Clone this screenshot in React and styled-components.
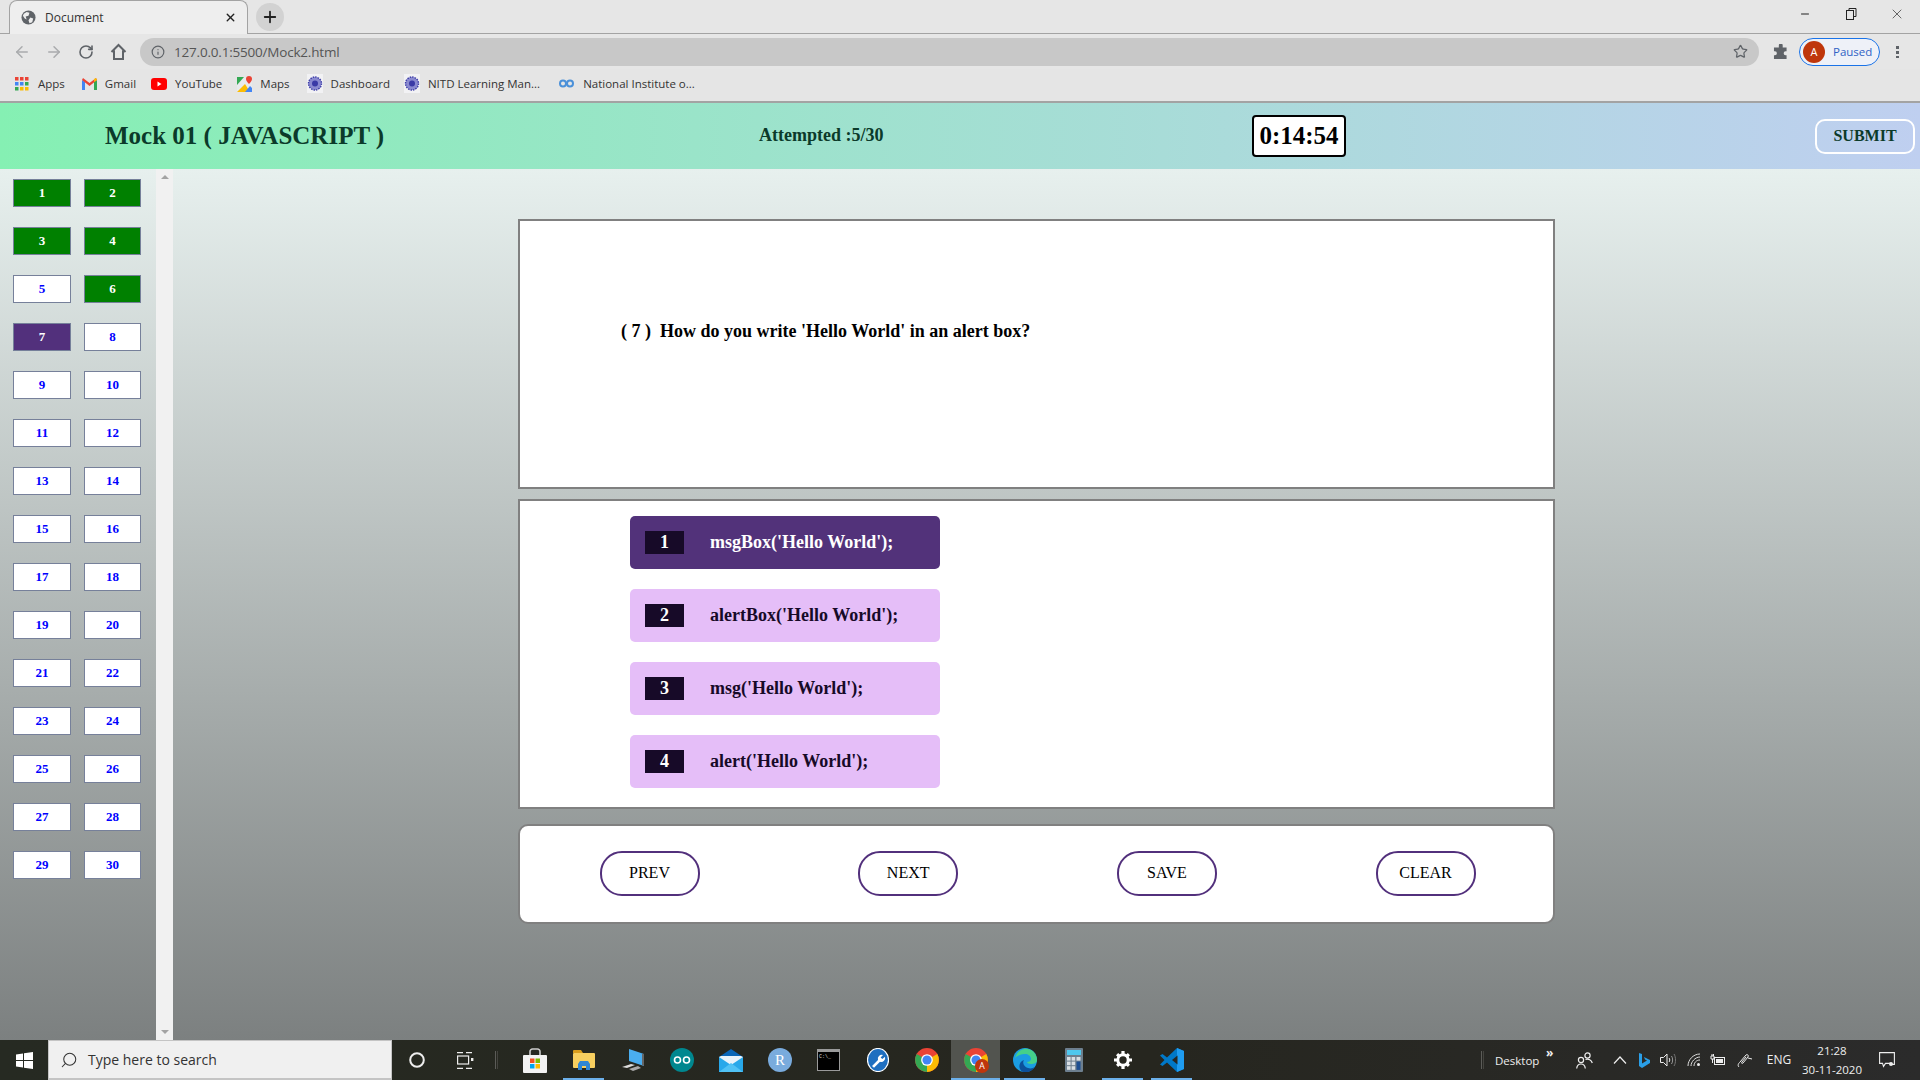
import React from 'react';
import styled, { createGlobalStyle } from 'styled-components';
import { ArrowLeft, ArrowRight, RotateCw, Info, Star, Search, X, Plus, Minus } from 'lucide-react';

const GlobalStyle = createGlobalStyle`
  html, body {
    margin: 0;
    padding: 0;
    width: 1920px;
    height: 1080px;
    overflow: hidden;
  }
  * {
    box-sizing: border-box;
  }
`;

const Screen = styled.div`
  width: 1920px;
  height: 1080px;
  display: flex;
  flex-direction: column;
  font-family: "Liberation Serif", serif;
`;

/* browser chrome */
const TabStrip = styled.div`
  height: 34px;
  background: #e6e6e6;
  border-bottom: 1px solid #a3a3a3;
  display: flex;
  padding-left: 9px;
  font-family: "Open Sans", sans-serif;
`;

const Tab = styled.div`
  width: 239px;
  height: 34px;
  margin-top: 0;
  background: #eeeeee;
  border: 1px solid #a3a3a3;
  border-bottom: none;
  border-radius: 8px 8px 0 0;
  display: flex;
  align-items: center;
  padding: 0 10px 0 11px;
  font-size: 12px;
  color: #333;
`;

const TabTitle = styled.span`
  margin-left: 9px;
  flex: 1;
`;

const NewTab = styled.div`
  width: 28px;
  height: 28px;
  margin: 3px 0 0 8px;
  border-radius: 50%;
  background: #d2d2d2;
  display: flex;
  align-items: center;
  justify-content: center;
`;

const WindowControls = styled.div`
  margin-left: auto;
  display: flex;
  align-items: center;
  height: 28px;
`;

const WindowButton = styled.div`
  width: 46px;
  display: flex;
  justify-content: center;
  color: #222;
`;

const Toolbar = styled.div`
  height: 35px;
  background: #e6e6e6;
  display: flex;
  align-items: center;
  padding-left: 6px;
`;

const NavIcon = styled.div`
  width: 32px;
  display: flex;
  justify-content: center;
  color: ${(p) => (p.$dim ? '#a9abad' : '#5f6368')};
`;

const UrlBar = styled.div`
  width: 1619px;
  height: 28px;
  margin-left: 6px;
  border-radius: 14px;
  background: #c8c8c8;
  display: flex;
  align-items: center;
  padding: 0 11px;
  color: #5f6368;
`;

const UrlText = styled.span`
  margin-left: 9px;
  flex: 1;
  font: 13.5px "Open Sans", sans-serif;
  letter-spacing: -0.2px;
  color: #555;
`;

const ExtIcon = styled.div`
  width: 16px;
  margin-left: 14px;
  display: flex;
`;

const ProfilePill = styled.div`
  width: 81px;
  height: 28px;
  margin-left: 10px;
  border: 1px solid #1a73e8;
  border-radius: 14px;
  background: #eef1f8;
  display: flex;
  align-items: center;
  padding-left: 3px;
  font: 11.5px "Open Sans", sans-serif;
  color: #2f62c5;
`;

const Avatar = styled.span`
  width: 22px;
  height: 22px;
  border-radius: 50%;
  background: #bf360c;
  color: #fff;
  display: flex;
  align-items: center;
  justify-content: center;
  margin-right: 8px;
  font-size: 11px;
`;

const MoreDots = styled.div`
  width: 3px;
  height: 13px;
  margin-left: 16px;
  background: radial-gradient(circle at center, #5f6368 1.5px, transparent 1.7px) 0 0 / 3px 5px;
`;

const Bookmarks = styled.div`
  height: 34px;
  background: #e5e5e5;
  border-bottom: 2px solid #a3a3a3;
  display: flex;
  align-items: center;
  padding: 0 0 3px 15px;
  font: 11.5px "Open Sans", sans-serif;
  color: #333;
`;

const Bookmark = styled.div`
  display: flex;
  align-items: center;
  gap: ${(p) => p.$gap || 8}px;
  margin-right: ${(p) => p.$space || 15}px;
  white-space: nowrap;
`;

/* page header */
const Header = styled.header`
  height: 66px;
  background: linear-gradient(to right, #85f0b3, #bfcff0);
  display: flex;
  align-items: center;
  padding: 0 5px 0 105px;
  color: #0b3a2a;
  font-weight: bold;
`;

const Title = styled.h1`
  width: 654px;
  margin: 0;
  font-size: 25px;
  font-weight: bold;
`;

const Attempted = styled.div`
  width: 493px;
  padding-bottom: 2px;
  font-size: 18px;
`;

const Timer = styled.div`
  width: 94px;
  height: 42px;
  background: #fff;
  border: 2px solid #000;
  border-radius: 4px;
  color: #000;
  font-size: 25px;
  display: flex;
  align-items: center;
  justify-content: center;
`;

const SubmitButton = styled.button`
  width: 100px;
  height: 35px;
  margin-left: auto;
  background: transparent;
  border: 2px solid #fff;
  border-radius: 10px;
  color: #0b3a2a;
  font: bold 16px "Liberation Serif", serif;
`;

/* page body */
const Body = styled.div`
  flex: 1;
  display: flex;
  background: linear-gradient(to bottom, #e7f0ee, #7c8080);
  min-height: 0;
`;

const Sidebar = styled.aside`
  width: 156px;
  padding: 10px 0 0 13px;
  display: grid;
  grid-template-columns: 58px 57px;
  grid-auto-rows: 28px;
  column-gap: 13px;
  row-gap: 20px;
  align-content: start;
`;

const NumberButton = styled.div`
  border: 1px solid #76809a;
  background: ${(p) => (p.$state === 'done' ? '#008000' : p.$state === 'current' ? '#52307c' : '#fff')};
  color: ${(p) => (p.$state === 'todo' ? '#0000ff' : '#fff')};
  font-size: 13px;
  font-weight: bold;
  display: flex;
  align-items: center;
  justify-content: center;
`;

const ScrollBar = styled.div`
  width: 17px;
  background: #f1f1f1;
  display: flex;
  flex-direction: column;
  justify-content: space-between;
  align-items: center;
  padding: 6px 0;
`;

const ScrollArrow = styled.div`
  width: 0;
  height: 0;
  border-left: 4px solid transparent;
  border-right: 4px solid transparent;
  ${(p) => (p.$down ? 'border-top' : 'border-bottom')}: 4px solid #a3a3a3;
`;

const Main = styled.main`
  width: 1037px;
  margin-left: 345px;
  padding-top: 50px;
`;

const QuestionBox = styled.section`
  height: 270px;
  background: #fff;
  border: 2px solid #808080;
  padding: 100px 0 0 101px;
  font-size: 18px;
  font-weight: bold;
  color: #000;
  white-space: pre;
`;

const OptionsBox = styled.section`
  height: 310px;
  margin-top: 10px;
  background: #fff;
  border: 2px solid #808080;
  padding: 15px 0 0 110px;
  display: flex;
  flex-direction: column;
  gap: 20px;
`;

const Option = styled.div`
  width: 310px;
  height: 53px;
  border-radius: 5px;
  background: ${(p) => (p.$selected ? '#52327a' : '#e5bef8')};
  color: ${(p) => (p.$selected ? '#fff' : '#170a28')};
  display: flex;
  align-items: center;
  padding-left: 15px;
  font-size: 18px;
  font-weight: bold;
`;

const OptionBadge = styled.span`
  width: 39px;
  height: 23px;
  margin-right: 26px;
  background: #170a28;
  color: #fff;
  display: flex;
  align-items: center;
  justify-content: center;
`;

const OptionText = styled.span`
  padding-bottom: 1px;
`;

const NavBox = styled.section`
  height: 100px;
  margin-top: 15px;
  background: #fff;
  border: 2px solid #808080;
  border-radius: 10px;
  display: flex;
  align-items: center;
  padding: 0 0 2px 79.5px;
  gap: 158.7px;
`;

const NavButton = styled.button`
  width: 100px;
  height: 45px;
  background: #fff;
  border: 2px solid #52307c;
  border-radius: 22px;
  color: #000;
  font: 16px "Liberation Serif", serif;
`;

/* windows taskbar */
const Taskbar = styled.footer`
  height: 40px;
  background: linear-gradient(to right, #262a22, #26261f 60%, #2b2b2b);
  display: flex;
  align-items: center;
  color: #eee;
  font-family: "Open Sans", sans-serif;
`;

const StartButton = styled.div`
  width: 48px;
  display: flex;
  justify-content: center;
`;

const SearchBox = styled.div`
  width: 344px;
  height: 40px;
  background: #f0f0f0;
  border: 1px solid #c4c4c4;
  border-bottom-width: 2px;
  display: flex;
  align-items: center;
  padding-left: 11px;
  font-size: 14px;
  color: #333;
  gap: 10px;
`;

const TaskSlot = styled.div`
  width: ${(p) => p.$width || 49}px;
  height: 40px;
  display: flex;
  align-items: center;
  justify-content: center;
  position: relative;
  background: ${(p) => (p.$active ? '#52544f' : 'transparent')};
  ${(p) =>
    p.$open &&
    `&::after {
      content: '';
      position: absolute;
      left: ${p.$active ? 0 : 4}px;
      right: ${p.$active ? 0 : 4}px;
      bottom: 0;
      height: 2px;
      background: #6cb0ea;
    }`}
`;

const Separator = styled.div`
  width: 3px;
  height: 18px;
  margin: 0 ${(p) => p.$right || 0}px 0 ${(p) => p.$left || 0}px;
  border-left: 1px solid #5c5c58;
  border-right: 1px solid #44443f;
`;

const Tray = styled.div`
  margin-left: auto;
  display: flex;
  align-items: center;
  height: 40px;
  font-size: 12px;
`;

const TraySlot = styled.div`
  width: ${(p) => p.$width}px;
  display: flex;
  justify-content: center;
  text-align: center;
  line-height: 20px;
`;

const Clock = styled.div`
  width: 72px;
  font-size: 11.5px;
  line-height: 19px;
  text-align: center;
`;

const DesktopLabel = styled.span`
  width: 62px;
  padding-left: 11px;
  font-size: 11.5px;
`;

const Chevrons = styled.span`
  width: 14px;
  margin-top: -16px;
  font-size: 12px;
  font-weight: bold;
`;

/* drawn icons */
const GlobeIcon = () => (
  <svg width="15" height="15" viewBox="0 0 16 16">
    <circle cx="8" cy="8" r="7.5" fill="#5f6368" />
    <path d="M3 4l3-2 3 1-1 3-3 1 1 3-2-1-2-3zM10 8l3 1-1 4-3 1-1-3z" fill="#eee" />
  </svg>
);

const HomeIcon = () => (
  <svg width="17" height="18" viewBox="0 0 17 18" fill="none" stroke="#5f6368" strokeWidth="2">
    <path d="M1.5 9L8.5 2l7 7M4 7.5V16h9V7.5" />
  </svg>
);

const PuzzleIcon = () => (
  <svg width="16" height="16" viewBox="0 0 16 16">
    <path d="M6 1a2 2 0 0 1 4 0v2h4v4h-1a2 2 0 0 0 0 4h1v4H1v-4h1a2 2 0 0 0 0-4H1V3h5z" fill="#5f6368" transform="translate(0 .5) scale(.97)" />
  </svg>
);

const AppsIcon = () => {
  const colors = ['#ea4335', '#ea4335', '#ea4335', '#4285f4', '#4285f4', '#34a853', '#34a853', '#fbbc04', '#fbbc04'];
  return (
    <svg width="14" height="14" viewBox="0 0 14 14">
      {colors.map((c, i) => (
        <rect key={i} x={(i % 3) * 5} y={Math.floor(i / 3) * 5} width="3.5" height="3.5" fill={c} />
      ))}
    </svg>
  );
};

const GmailIcon = () => (
  <svg width="15" height="12" viewBox="0 0 15 12">
    <path d="M0 2v10h3V4z" fill="#4285f4" />
    <path d="M15 2v10h-3V4z" fill="#34a853" />
    <path d="M0 2l1-2 6.5 5L14 0l1 2-7.500 6z" fill="#ea4335" />
    <path d="M12 1l2-1 1 2-3 2z" fill="#fbbc04" />
  </svg>
);

const YoutubeIcon = () => (
  <svg width="16" height="12" viewBox="0 0 16 12">
    <rect width="16" height="12" rx="3" fill="#f00" />
    <path d="M6.5 3.500l4 2.500-4 2.500z" fill="#fff" />
  </svg>
);

const MapsIcon = () => (
  <svg width="16" height="16" viewBox="0 0 16 16">
    <rect width="15" height="15" y="1" fill="#e8eaed" />
    <path d="M0 1h7L0 9z" fill="#34a853" />
    <path d="M0 16l8-8 5 8z" fill="#fbbc04" />
    <path d="M8 16l5-6 2 2v4z" fill="#4285f4" />
    <path d="M12 0a3 3 0 0 1 3 3c0 2-3 5-3 5S9 5 9 3a3 3 0 0 1 3-3z" fill="#ea4335" />
  </svg>
);

const CrestIcon = () => (
  <svg width="16" height="19" viewBox="0 0 16 19">
    <rect width="16" height="19" fill="#f2f2f4" />
    <circle cx="8" cy="9.5" r="6.5" fill="#8a8ad0" stroke="#3a3aa6" strokeWidth="1.4" strokeDasharray="1.5 1" />
    <circle cx="8" cy="9.5" r="3" fill="#3a3aa6" />
  </svg>
);

const CourseraIcon = () => (
  <svg width="15" height="9" viewBox="0 0 15 9" fill="none" stroke="#4a90d9" strokeWidth="2">
    <circle cx="4" cy="4.5" r="3" />
    <circle cx="11" cy="4.5" r="3" />
  </svg>
);

const WindowsIcon = () => (
  <svg width="17" height="17" viewBox="0 0 17 17" fill="#fff">
    <path d="M0 2.400l7-1v6.600H0zM8 1.200L17 0v8H8zM0 9h7v6.600l-7-1zM8 9h9v8l-9-1.200z" />
  </svg>
);

const TaskViewIcon = () => (
  <svg width="17" height="17" viewBox="0 0 17 17" fill="none" stroke="#eee" strokeWidth="1.2">
    <path d="M0 .6h6M9 .6h6M0 16.400h6M9 16.400h6" />
    <rect x=".6" y="4" width="11" height="8" />
    <rect x="14" y="6" width="2.400" height="3" fill="#eee" stroke="none" />
  </svg>
);

const StoreIcon = () => (
  <svg width="24" height="25" viewBox="0 0 24 25">
    <path d="M7 7V3.500A2.500 2.500 0 0 1 9.500 1h5A2.500 2.500 0 0 1 17 3.500V7" fill="none" stroke="#ccc" strokeWidth="1.6" />
    <rect y="7" width="24" height="18" rx="1" fill="#f3f3f3" />
    <rect x="7" y="10.500" width="4.500" height="4.500" fill="#f25022" />
    <rect x="12.500" y="10.500" width="4.500" height="4.500" fill="#7fba00" />
    <rect x="7" y="16" width="4.500" height="4.500" fill="#00a4ef" />
    <rect x="12.500" y="16" width="4.500" height="4.500" fill="#ffb900" />
  </svg>
);

const FolderIcon = () => (
  <svg width="22" height="20" viewBox="0 0 22 20">
    <path d="M0 1a1 1 0 0 1 1-1h7l2 3h-10z" fill="#d99d1c" />
    <rect y="3" width="22" height="15" rx="1" fill="#f7cf5f" />
    <path d="M5 20v-6l2-3h8l2 3v6h-4v-4H9v4z" fill="#2f86d4" />
  </svg>
);

const PcIcon = () => (
  <svg width="24" height="24" viewBox="0 0 24 24">
    <path d="M8 1l15 5v12L8 13z" fill="#4aaef0" />
    <path d="M21 6l2 0v12l-2-1z" fill="#666" />
    <path d="M1 19l9-3 4 1-8 3z" fill="#ddd" />
    <path d="M8 21l9-3 3 2-8 3z" fill="#aaa" />
  </svg>
);

const ArduinoIcon = () => (
  <svg width="24" height="24" viewBox="0 0 24 24">
    <circle cx="12" cy="12" r="12" fill="#00878f" />
    <g fill="none" stroke="#fff" strokeWidth="1.6">
      <circle cx="7.500" cy="12" r="3" />
      <circle cx="16.500" cy="12" r="3" />
    </g>
  </svg>
);

const MailIcon = () => (
  <svg width="24" height="23" viewBox="0 0 24 23">
    <path d="M12 0l12 8v15H0V8z" fill="#0a66b8" />
    <rect y="8" width="24" height="15" fill="#28a8ea" />
    <path d="M0 8l12 8 12-8-2-1H2z" fill="#e9f3fb" />
    <path d="M0 23l12-9 12 9z" fill="#50c2f5" />
  </svg>
);

const RIcon = () => (
  <svg width="24" height="24" viewBox="0 0 24 24">
    <circle cx="12" cy="12" r="12" fill="#79abdd" />
    <text x="12" y="17" textAnchor="middle" fontSize="15" fontFamily="Liberation Serif, serif" fill="#fff">R</text>
  </svg>
);

const CmdIcon = () => (
  <svg width="23" height="22" viewBox="0 0 23 22">
    <rect width="23" height="22" fill="#9a9a9a" />
    <rect x="1" y="3" width="21" height="18" fill="#000" />
    <text x="2" y="9" fontSize="5" fontFamily="Liberation Mono, monospace" fill="#ddd">C:\_</text>
  </svg>
);

const WrenchIcon = () => (
  <svg width="22" height="24" viewBox="0 0 22 24">
    <ellipse cx="11" cy="12" rx="10.500" ry="11.500" fill="#1f6fc0" stroke="#fff" strokeWidth="1.2" />
    <path d="M5 18l6-6a4 4 0 0 1 5-5l-2.400 2.400 1.700 1.700L18 8.700a4 4 0 0 1-5 5l-6 6z" fill="#fff" />
  </svg>
);

const ChromeIcon = ({ badge }) => (
  <svg width="26" height="26" viewBox="0 0 24 24">
    <circle cx="12" cy="12" r="11" fill="#ea4335" />
    <path d="M12 12L2.500 6.500A11 11 0 0 0 12 23z" fill="#34a853" />
    <path d="M12 12v11A11 11 0 0 0 21.500 6.500z" fill="#fbbc04" />
    <circle cx="12" cy="12" r="5.400" fill="#fff" />
    <circle cx="12" cy="12" r="4.200" fill="#4285f4" />
    {badge && <circle cx="17.500" cy="17.500" r="6.500" fill="#bf360c" />}
    {badge && (
      <text x="17.500" y="20.500" textAnchor="middle" fontSize="8" fontFamily="Open Sans, sans-serif" fill="#fff">A</text>
    )}
  </svg>
);

const EdgeIcon = () => (
  <svg width="24" height="24" viewBox="0 0 24 24">
    <circle cx="12" cy="12" r="12" fill="#1b9de2" />
    <path d="M2 10C4 3 10 0 15 1c5 1 9 5 9 11 0 3-3 4-6 4-2 0-4-1-4-2 2 0 4-1 4-3 0-3-3-5-6-5-5 0-8 2-10 4z" fill="#45d08a" />
    <path d="M10 24C5 22 5 14 11 12c-2 3 0 7 4 8 3 1 5 0 7-1-3 4-7 6-12 5z" fill="#0c4f9a" />
  </svg>
);

const CalcIcon = () => (
  <svg width="18" height="24" viewBox="0 0 18 24">
    <rect width="18" height="24" rx="1" fill="#6d7f8e" />
    <rect x="2" y="2" width="14" height="5" fill="#4fc8ee" />
    {[0, 1, 2].map((r) =>
      [0, 1].map((c) => <rect key={`${r}${c}`} x={2 + c * 4.6} y={9 + r * 4.6} width="3.6" height="3.6" fill="#d8dee3" />)
    )}
    <rect x="11.500" y="13.500" width="4" height="8.400" fill="#1d4f91" />
    <rect x="11.500" y="9" width="4" height="3.600" fill="#d8dee3" />
  </svg>
);

const GearIcon = () => (
  <svg width="18" height="18" viewBox="0 0 18 18">
    <circle cx="9" cy="9" r="5.200" fill="none" stroke="#fff" strokeWidth="3" />
    <path d="M7.400 0h3.200v3H7.400zM7.400 15h3.200v3H7.400zM0 7.400h3v3.200H0zM15 7.400h3v3.200h-3zM2 4.200L4.200 2l2 2L4 6.200zM13.800 16L11.800 14l2.200-2.200 2 2zM2 13.800L4 11.800 6.200 14l-2 2zM11.800 4l2-2L16 4.200l-2 2z" fill="#fff" />
  </svg>
);

const VscodeIcon = () => (
  <svg width="24" height="24" viewBox="0 0 24 24">
    <path d="M17 0l7 3v18l-7 3L7 14.500 2.500 18 0 16.500 4.500 12 0 7.500 2.500 6 7 9.500z" fill="#0078c8" />
    <path d="M17 0l7 3v18l-7 3z" fill="#1f9cf0" />
    <path d="M17.500 7.500L12 12l5.500 4.500z" fill="#262622" />
  </svg>
);

const PeopleIcon = () => (
  <svg width="17" height="17" viewBox="0 0 17 17" fill="none" stroke="#eee" strokeWidth="1.2">
    <circle cx="5" cy="8" r="2.600" />
    <path d="M.7 16.500c.3-3 2-4.500 4.300-4.500s4 1.500 4.300 4.500" />
    <circle cx="11.500" cy="3.500" r="2.600" />
    <path d="M9.500 7.500c3-1 6 .5 6.800 3.500" />
  </svg>
);

const BingIcon = () => (
  <svg width="11" height="15" viewBox="0 0 11 15">
    <path d="M0 0l3 1v9.500l5-3-2-1-1-2.500L11 7v3l-8 5-3-2z" fill="#2a9fe8" />
  </svg>
);

const SpeakerIcon = () => (
  <svg width="16" height="14" viewBox="0 0 16 14" fill="none" stroke="#eee" strokeWidth="1">
    <path d="M.5 4.500h3L7 1v12L3.500 9.500h-3z" />
    <path d="M9 5c1 1 1 3 0 4" />
    <path d="M11.500 3c1.500 2 1.500 6 0 8" stroke="#999" />
    <path d="M14 1c2 3 2 9 0 12" stroke="#777" />
  </svg>
);

const WifiIcon = () => (
  <svg width="14" height="14" viewBox="0 0 14 14" fill="none" stroke="#ddd" strokeWidth="1">
    <path d="M1 13C1 7 6 1 13 1" />
    <path d="M4 13c0-4 4-9 9-9" />
    <path d="M7 13c0-3 2-6 6-6" />
    <circle cx="11.500" cy="11.500" r="1.500" fill="#eee" stroke="none" />
  </svg>
);

const BatteryIcon = () => (
  <svg width="16" height="12" viewBox="0 0 16 12" fill="none" stroke="#eee" strokeWidth="1">
    <path d="M1 2h3v3H1zM2 0v2M3.500 0v2M2.500 5v4" />
    <rect x="4.500" y="3.500" width="10" height="7" />
    <rect x="6" y="5" width="7" height="4" fill="#eee" stroke="none" />
  </svg>
);

const PenIcon = () => (
  <svg width="16" height="15" viewBox="0 0 16 15" fill="none" stroke="#eee" strokeWidth="1">
    <path d="M2 14c-2-2 0-4 1-5l6-7c1-1 3 0 2 2L6 10c-1 1-2 0-1-1l4-5" />
    <path d="M11 5l4 1" />
  </svg>
);

const NotificationIcon = () => (
  <svg width="16" height="16" viewBox="0 0 16 16" fill="none" stroke="#eee" strokeWidth="1.1">
    <path d="M.6.6h14.800v11.800h-3l-1-1H6.500l-2 3-1-3H.6z" />
    <circle cx="12" cy="12" r="2" fill="#eee" stroke="none" />
  </svg>
);

const questionStates = Array.from({ length: 30 }, (_, i) => {
  const n = i + 1;
  if (n === 7) return 'current';
  if (n <= 6 && n !== 5) return 'done';
  return 'todo';
});

const options = ["msgBox('Hello World');", "alertBox('Hello World');", "msg('Hello World');", "alert('Hello World');"];

const taskApps = [
  { icon: <StoreIcon /> },
  { icon: <FolderIcon />, open: true },
  { icon: <PcIcon /> },
  { icon: <ArduinoIcon /> },
  { icon: <MailIcon /> },
  { icon: <RIcon /> },
  { icon: <CmdIcon /> },
  { icon: <WrenchIcon /> },
  { icon: <ChromeIcon /> },
  { icon: <ChromeIcon badge />, open: true, active: true },
  { icon: <EdgeIcon />, open: true },
  { icon: <CalcIcon /> },
  { icon: <GearIcon />, open: true },
  { icon: <VscodeIcon />, open: true },
];

const App = () => {
  return (
    <Screen>
      <GlobalStyle />
      <TabStrip>
        <Tab>
          <GlobeIcon />
          <TabTitle>Document</TabTitle>
          <X size={13} color="#222" strokeWidth={2.6} />
        </Tab>
        <NewTab>
          <Plus size={18} color="#222" strokeWidth={2.4} />
        </NewTab>
        <WindowControls>
          <WindowButton>
            <Minus size={12} />
          </WindowButton>
          <WindowButton>
            <svg width="11" height="12" viewBox="0 0 11 12" fill="none" stroke="#222">
              <path d="M3 2.500V.5h7v8H8" />
              <rect x=".5" y="2.500" width="7" height="9" />
            </svg>
          </WindowButton>
          <WindowButton>
            <X size={16} strokeWidth={1} />
          </WindowButton>
        </WindowControls>
      </TabStrip>

      <Toolbar>
        <NavIcon $dim>
          <ArrowLeft size={18} />
        </NavIcon>
        <NavIcon $dim>
          <ArrowRight size={18} />
        </NavIcon>
        <NavIcon>
          <RotateCw size={16} strokeWidth={2.4} />
        </NavIcon>
        <NavIcon>
          <HomeIcon />
        </NavIcon>
        <UrlBar>
          <Info size={14} />
          <UrlText>127.0.0.1:5500/Mock2.html</UrlText>
          <Star size={15} />
        </UrlBar>
        <ExtIcon>
          <PuzzleIcon />
        </ExtIcon>
        <ProfilePill>
          <Avatar>A</Avatar>
          Paused
        </ProfilePill>
        <MoreDots />
      </Toolbar>

      <Bookmarks>
        <Bookmark $gap={9} $space={17}>
          <AppsIcon />
          Apps
        </Bookmark>
        <Bookmark $space={15}>
          <GmailIcon />
          Gmail
        </Bookmark>
        <Bookmark $space={15}>
          <YoutubeIcon />
          YouTube
        </Bookmark>
        <Bookmark $gap={7} $space={17}>
          <MapsIcon />
          Maps
        </Bookmark>
        <Bookmark $space={14}>
          <CrestIcon />
          Dashboard
        </Bookmark>
        <Bookmark $space={19}>
          <CrestIcon />
          NITD Learning Man...
        </Bookmark>
        <Bookmark $gap={9}>
          <CourseraIcon />
          National Institute o...
        </Bookmark>
      </Bookmarks>

      <Header>
        <Title>Mock 01 ( JAVASCRIPT )</Title>
        <Attempted>Attempted :5/30</Attempted>
        <Timer>0:14:54</Timer>
        <SubmitButton>SUBMIT</SubmitButton>
      </Header>

      <Body>
        <Sidebar>
          {questionStates.map((state, i) => (
            <NumberButton key={i} $state={state}>
              {i + 1}
            </NumberButton>
          ))}
        </Sidebar>
        <ScrollBar>
          <ScrollArrow />
          <ScrollArrow $down />
        </ScrollBar>
        <Main>
          <QuestionBox>{"( 7 )  How do you write 'Hello World' in an alert box?"}</QuestionBox>
          <OptionsBox>
            {options.map((text, i) => (
              <Option key={text} $selected={i === 0}>
                <OptionBadge>{i + 1}</OptionBadge>
                <OptionText>{text}</OptionText>
              </Option>
            ))}
          </OptionsBox>
          <NavBox>
            <NavButton>PREV</NavButton>
            <NavButton>NEXT</NavButton>
            <NavButton>SAVE</NavButton>
            <NavButton>CLEAR</NavButton>
          </NavBox>
        </Main>
      </Body>

      <Taskbar>
        <StartButton>
          <WindowsIcon />
        </StartButton>
        <SearchBox>
          <Search size={18} strokeWidth={1.4} style={{ transform: 'scaleX(-1)' }} />
          Type here to search
        </SearchBox>
        <TaskSlot>
          <svg width="16" height="16" viewBox="0 0 16 16" fill="none" stroke="#eee" strokeWidth="2">
            <circle cx="8" cy="8" r="6.800" />
          </svg>
        </TaskSlot>
        <TaskSlot>
          <TaskViewIcon />
        </TaskSlot>
        <Separator $left={5} $right={12} />
        {taskApps.map((app, i) => (
          <TaskSlot key={i} $open={app.open} $active={app.active}>
            {app.icon}
          </TaskSlot>
        ))}
        <Tray>
          <Separator />
          <DesktopLabel>Desktop</DesktopLabel>
          <Chevrons>»</Chevrons>
          <TraySlot $width={48}>
            <PeopleIcon />
          </TraySlot>
          <TraySlot $width={24}>
            <svg width="14" height="8" viewBox="0 0 14 8" fill="none" stroke="#eee" strokeWidth="1.2">
              <path d="M1 7.500L7 1l6 6.500" />
            </svg>
          </TraySlot>
          <TraySlot $width={24}>
            <BingIcon />
          </TraySlot>
          <TraySlot $width={24}>
            <SpeakerIcon />
          </TraySlot>
          <TraySlot $width={28}>
            <WifiIcon />
          </TraySlot>
          <TraySlot $width={20}>
            <BatteryIcon />
          </TraySlot>
          <TraySlot $width={34}>
            <PenIcon />
          </TraySlot>
          <TraySlot $width={34}>ENG</TraySlot>
          <Clock>
            21:28
            <br />
            30-11-2020
          </Clock>
          <TraySlot $width={38}>
            <NotificationIcon />
          </TraySlot>
          <TraySlot $width={14} />
        </Tray>
      </Taskbar>
    </Screen>
  );
};

export default App;
